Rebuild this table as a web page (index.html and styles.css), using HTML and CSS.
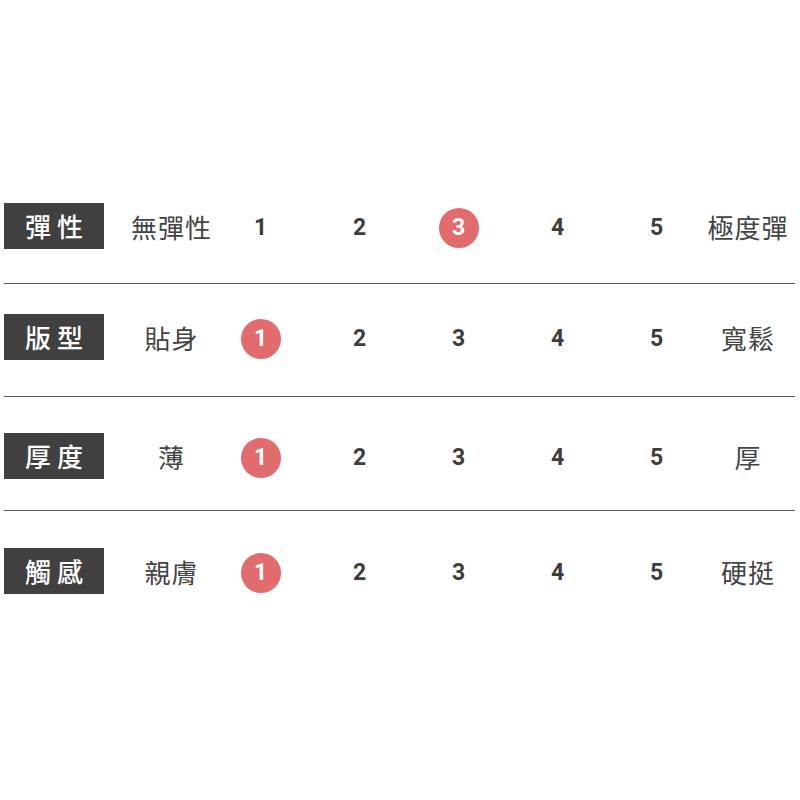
FILE: index.html
```html
<!DOCTYPE html>
<html lang="zh-Hant">
<head>
<meta charset="utf-8">
<link rel="stylesheet" href="styles.css">
</head>
<body>
<div class="table">
  <div class="row">
    <div class="label">彈性</div>
    <div class="end">無彈性</div>
    <div class="num">1</div>
    <div class="num">2</div>
    <div class="num active">3</div>
    <div class="num">4</div>
    <div class="num">5</div>
    <div class="end">極度彈</div>
  </div>
  <div class="divider d1"></div>
  <div class="row">
    <div class="label">版型</div>
    <div class="end">貼身</div>
    <div class="num active">1</div>
    <div class="num">2</div>
    <div class="num">3</div>
    <div class="num">4</div>
    <div class="num">5</div>
    <div class="end">寬鬆</div>
  </div>
  <div class="divider d2"></div>
  <div class="row">
    <div class="label">厚度</div>
    <div class="end">薄</div>
    <div class="num active">1</div>
    <div class="num">2</div>
    <div class="num">3</div>
    <div class="num">4</div>
    <div class="num">5</div>
    <div class="end">厚</div>
  </div>
  <div class="divider d3"></div>
  <div class="row">
    <div class="label">觸感</div>
    <div class="end">親膚</div>
    <div class="num active">1</div>
    <div class="num">2</div>
    <div class="num">3</div>
    <div class="num">4</div>
    <div class="num">5</div>
    <div class="end">硬挺</div>
  </div>
</div>
</body>
</html>
```

FILE: styles.css
```css
html, body {
  margin: 0;
  padding: 0;
  background: #ffffff;
}
body {
  font-family: "Noto Sans CJK TC", "Noto Sans", sans-serif;
  color: #444444;
}
.table {
  width: 791px;
  margin-left: 4px;
  padding-top: 203px;
}
.row {
  display: grid;
  grid-template-columns: 128px 79px repeat(5, 99px) 84px;
  align-items: center;
  height: 46px;
}
.label {
  width: 100px;
  height: 46px;
  background: #404040;
  color: #ffffff;
  font-size: 26px;
  font-weight: 500;
  letter-spacing: 6px;
  text-indent: 6px;
  display: flex;
  align-items: center;
  justify-content: center;
  line-height: 1;
}
.end {
  justify-self: center;
  font-size: 26px;
  line-height: 1;
  letter-spacing: 1px;
  white-space: nowrap;
  color: #444444;
  padding-top: 2px;
}
.num {
  justify-self: center;
  width: 40px;
  height: 40px;
  margin-top: 3px;
  border-radius: 50%;
  display: flex;
  align-items: center;
  justify-content: center;
  font-family: Roboto, "Liberation Sans", sans-serif;
  font-weight: 700;
  font-size: 23px;
  color: #3d3d3d;
}
.num.active {
  background: #e26b6e;
  color: #ffffff;
}
.divider {
  height: 1px;
  background: #5a5a5a;
}
.d1 { margin: 34px 0 30px; }
.d2 { margin: 36px 0 36px; }
.d3 { margin: 31px 0 37px; }
```
